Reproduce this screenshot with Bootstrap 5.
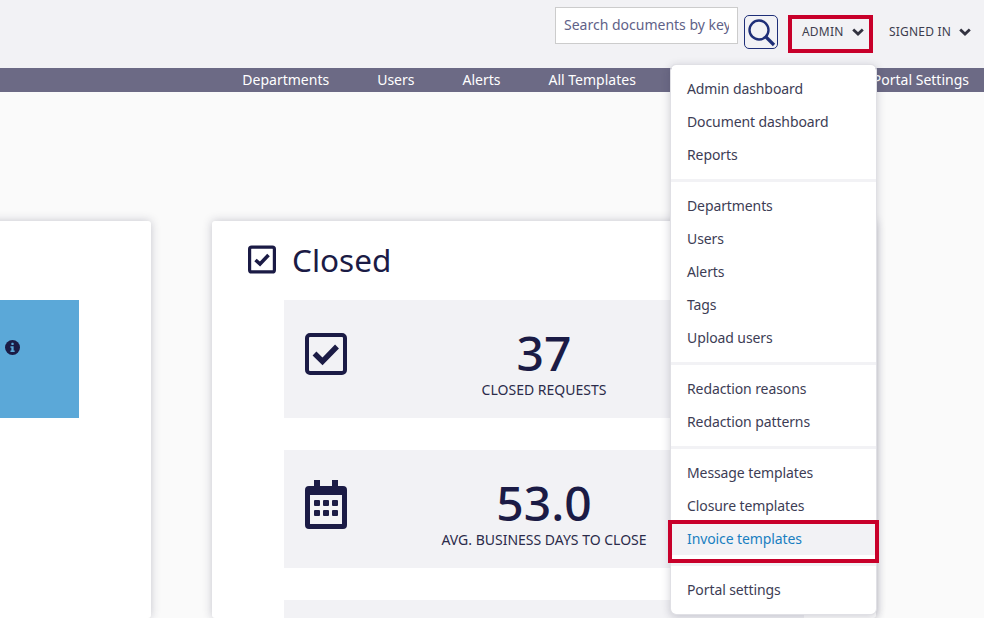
<!doctype html>
<html lang="en"><head><meta charset="utf-8"><title>Admin</title>
<link href="https://cdn.jsdelivr.net/npm/bootstrap@5.3.0/dist/css/bootstrap.min.css" rel="stylesheet">
<style>
html,body{height:618px;overflow:hidden}
body{background:#fafafa;font-family:"Noto Sans","Open Sans",sans-serif;color:#1b1b45;position:relative;width:984px}
.topbar{height:68px;background:#f2f2f5}
.search-box{width:183px;height:37px;margin-top:7px;border:1px solid #ccc;background:#fff;border-radius:0;font-size:14px;color:#5a5f85;padding:0 8px 2px;box-shadow:none}
.search-box::placeholder{color:#5f6288;opacity:1}
.search-btn{width:34px;height:34px;margin:15px 0 0 6px;border:1px solid #1f2f78;border-radius:5px;padding:0;display:flex;align-items:center;justify-content:center;background:transparent}
.usr-link{font-size:12px;color:#3d3d4e;margin-top:13px;height:38px;display:flex;align-items:center;letter-spacing:.2px}
.usr-admin{width:85px;margin-left:10px;padding-left:14px}
.usr-signed{margin-left:16px;width:95px}
.chev{margin-left:8px}
.subnav{height:24px;background:#6c6a85;padding-right:15px;gap:48px}
.subnav a{color:#fff;font-size:14px;line-height:24px;text-decoration:none}
.subnav .gap-slot{width:141px}
.stage{padding:129px 108px 0 0;width:984px;height:526px;gap:61px;overflow:hidden}
.panel{flex:0 0 664px;background:#fff;border-radius:3px;box-shadow:0 0 10px rgba(40,40,70,.25);padding:0 72px 0 36px}
.panel-head{height:79px;gap:16px;font-size:31.5px;padding-bottom:2px}
.stat{height:118px;background:#f2f2f5;margin-left:36px;margin-bottom:32px;padding:33px 0 0 21px;position:relative}
.stat-blue{background:#5ba8d8;padding:40px 59px 0 0}
.stat-cut{height:18px;margin-bottom:0;padding:0}
.cal-ico{margin-top:-3px}
.stat-body{position:absolute;left:0;right:0;top:29px;text-align:center}
.stat-num{font-size:48px;font-weight:500;line-height:48px;color:#1b1b45}
.stat-lbl{font-size:14px;line-height:20px;color:#2b2b4a;text-transform:uppercase;margin-top:3px}
.admin-menu{position:absolute;left:670px;top:64px;width:207px;height:550.5px;margin:0;padding:7px 0 8px;display:block;border:1px solid #e0e0e5;border-radius:6px;box-shadow:0 2px 8px rgba(40,40,70,.22)}
.admin-menu .dropdown-item{height:33px;line-height:33px;padding:0 16px;font-size:14px;color:#3d3d55;letter-spacing:-.1px}
.admin-menu .dropdown-item.picked{background:#f2f2f5;color:#1a7fc1}
.admin-menu hr{margin:7.5px 0;height:3px;border:0;background:#f2f2f5;opacity:1}
.redbox{position:absolute;border:4px solid #c8002a;pointer-events:none;z-index:1010}
.rb-admin{left:788px;top:15px;width:85px;height:38px}
.rb-invoice{left:668px;top:520px;width:211px;height:43px}
</style></head>
<body>
<header class="topbar d-flex justify-content-end align-items-start">
  <input class="form-control search-box" type="text" placeholder="Search documents by keyword">
  <button class="btn search-btn" type="button" aria-label="Search"><svg width="30" height="30" viewBox="0 0 30 30" fill="none" stroke="#1f2f78"><circle cx="13" cy="13" r="9.5" stroke-width="2.4"/><path d="M20 20l8 8" stroke-width="3.2"/></svg></button>
  <a class="usr-link usr-admin text-decoration-none" href="#">ADMIN<svg class="chev" width="12" height="8" viewBox="0 0 12 8" fill="none" stroke="#333340" stroke-width="2.8"><path d="M1.2 1.5L6 6l4.8-4.5"/></svg></a>
  <a class="usr-link usr-signed text-decoration-none" href="#">SIGNED IN<svg class="chev" width="12" height="8" viewBox="0 0 12 8" fill="none" stroke="#333340" stroke-width="2.8"><path d="M1.2 1.5L6 6l4.8-4.5"/></svg></a>
</header>
<nav class="subnav d-flex justify-content-end">
  <a href="#">Departments</a><a href="#">Users</a><a href="#">Alerts</a><a href="#">All Templates</a><span class="gap-slot"></span><a href="#">Portal Settings</a>
</nav>
<main class="stage d-flex justify-content-end">
  <section class="panel">
    <div class="panel-head"></div>
    <div class="stat stat-blue d-flex align-items-start justify-content-end">
      <svg width="15" height="15" viewBox="0 0 16 16"><circle cx="8" cy="8" r="8" fill="#1b1b45"/><rect x="6.8" y="3" width="2.4" height="2.4" rx=".6" fill="#5ba8d8"/><path d="M5.8 6.6h3.4v4.6h1.1v1.6H5.8v-1.6h1v-3h-1z" fill="#5ba8d8"/></svg>
    </div>
  </section>
  <section class="panel">
    <div class="panel-head d-flex align-items-center">
      <svg width="28" height="29" viewBox="0 0 28 28" fill="none" stroke="#1b1b45"><rect x="1.6" y="1.6" width="24.8" height="24.8" rx="2" stroke-width="3.2"/><path d="M7.5 14.5l4.5 4 8.5-9" stroke-width="3.6"/></svg>
      <span>Closed</span>
    </div>
    <div class="stat">
      <svg width="42" height="42" viewBox="0 0 42 42" fill="none" stroke="#1b1b45"><rect x="2" y="2" width="38" height="38" rx="3" stroke-width="4"/><path d="M9.5 20.5l8 8 14.5-15" stroke-width="5.4"/></svg>
      <div class="stat-body"><div class="stat-num">37</div><div class="stat-lbl">Closed requests</div></div>
    </div>
    <div class="stat">
      <svg width="42" height="49" viewBox="0 0 42 49" class="d-block cal-ico"><path fill="#1b1b45" d="M9 0h6v6h12V0h6v6h5a4 4 0 0 1 4 4v35a4 4 0 0 1-4 4H4a4 4 0 0 1-4-4V10a4 4 0 0 1 4-4h5z"/><rect x="5" y="15" width="32" height="29" fill="#f2f2f5"/><g fill="#1b1b45"><rect x="9" y="20" width="6" height="6" rx="1"/><rect x="18" y="20" width="6" height="6" rx="1"/><rect x="27" y="20" width="6" height="6" rx="1"/><rect x="9" y="30" width="6" height="6" rx="1"/><rect x="18" y="30" width="6" height="6" rx="1"/><rect x="27" y="30" width="6" height="6" rx="1"/></g></svg>
      <div class="stat-body"><div class="stat-num">53.0</div><div class="stat-lbl">Avg. business days to close</div></div>
    </div>
    <div class="stat stat-cut"></div>
  </section>
</main>
<ul class="dropdown-menu admin-menu list-unstyled">
  <li><a class="dropdown-item" href="#">Admin dashboard</a></li>
  <li><a class="dropdown-item" href="#">Document dashboard</a></li>
  <li><a class="dropdown-item" href="#">Reports</a></li>
  <li><hr></li>
  <li><a class="dropdown-item" href="#">Departments</a></li>
  <li><a class="dropdown-item" href="#">Users</a></li>
  <li><a class="dropdown-item" href="#">Alerts</a></li>
  <li><a class="dropdown-item" href="#">Tags</a></li>
  <li><a class="dropdown-item" href="#">Upload users</a></li>
  <li><hr></li>
  <li><a class="dropdown-item" href="#">Redaction reasons</a></li>
  <li><a class="dropdown-item" href="#">Redaction patterns</a></li>
  <li><hr></li>
  <li><a class="dropdown-item" href="#">Message templates</a></li>
  <li><a class="dropdown-item" href="#">Closure templates</a></li>
  <li><a class="dropdown-item picked" href="#">Invoice templates</a></li>
  <li><hr></li>
  <li><a class="dropdown-item" href="#">Portal settings</a></li>
</ul>
<div class="redbox rb-admin"></div>
<div class="redbox rb-invoice"></div>
<script src="https://cdn.jsdelivr.net/npm/bootstrap@5.3.0/dist/js/bootstrap.bundle.min.js"></script>
</body></html>
